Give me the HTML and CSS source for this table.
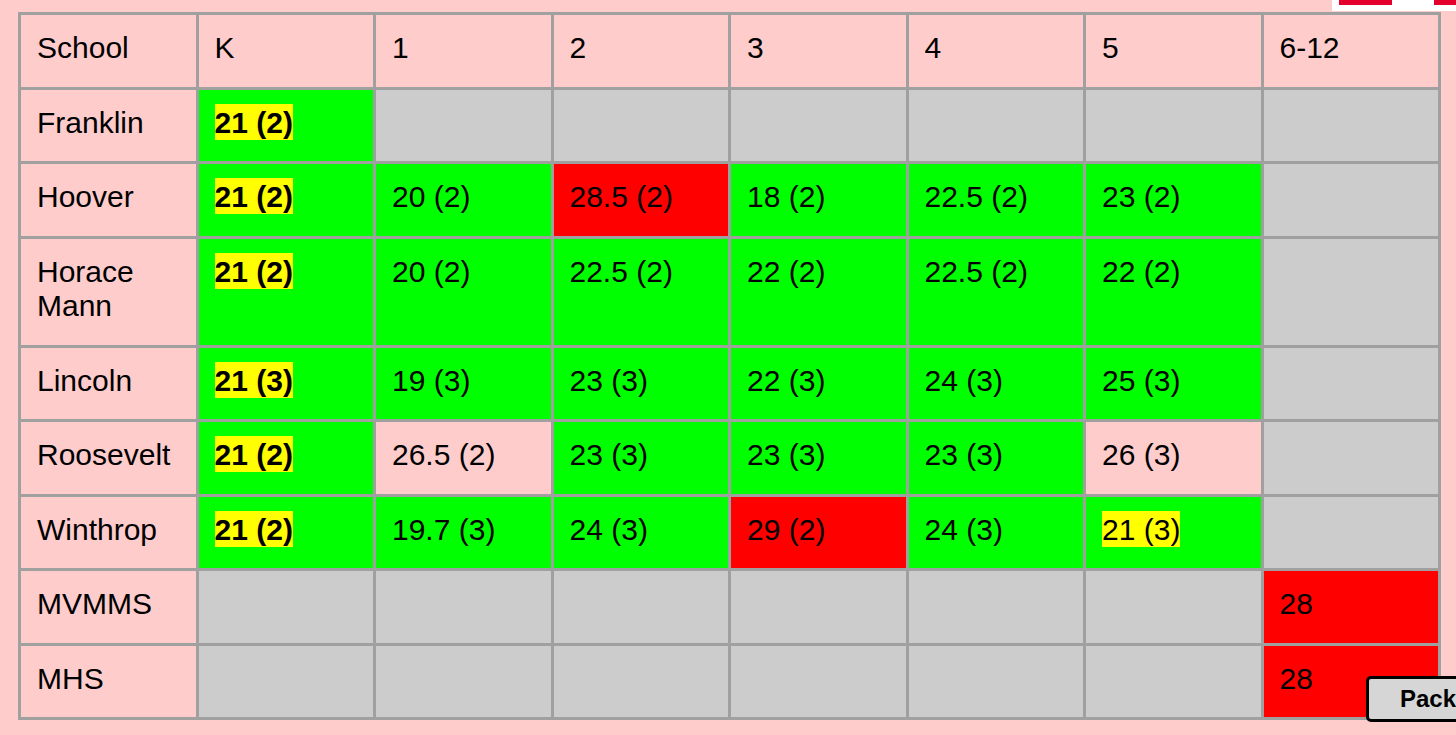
FILE: index.html
```html
<!DOCTYPE html>
<html>
<head>
<meta charset="utf-8">
<link rel="stylesheet" href="styles.css">
</head>
<body>
<div class="flag"><span class="bar bar-a"></span><span class="bar bar-b"></span></div>
<table class="grid">
  <tr><td class="pink">School</td><td class="pink">K</td><td class="pink">1</td><td class="pink">2</td><td class="pink">3</td><td class="pink">4</td><td class="pink">5</td><td class="pink">6-12</td></tr>
  <tr><td class="pink">Franklin</td><td class="green"><b class="hl">21 (2)</b></td><td class="grey"></td><td class="grey"></td><td class="grey"></td><td class="grey"></td><td class="grey"></td><td class="grey"></td></tr>
  <tr><td class="pink">Hoover</td><td class="green"><b class="hl">21 (2)</b></td><td class="green">20 (2)</td><td class="red">28.5 (2)</td><td class="green">18 (2)</td><td class="green">22.5 (2)</td><td class="green">23 (2)</td><td class="grey"></td></tr>
  <tr><td class="pink">Horace<br>Mann</td><td class="green"><b class="hl">21 (2)</b></td><td class="green">20 (2)</td><td class="green">22.5 (2)</td><td class="green">22 (2)</td><td class="green">22.5 (2)</td><td class="green">22 (2)</td><td class="grey"></td></tr>
  <tr><td class="pink">Lincoln</td><td class="green"><b class="hl">21 (3)</b></td><td class="green">19 (3)</td><td class="green">23 (3)</td><td class="green">22 (3)</td><td class="green">24 (3)</td><td class="green">25 (3)</td><td class="grey"></td></tr>
  <tr><td class="pink">Roosevelt</td><td class="green"><b class="hl">21 (2)</b></td><td class="pink">26.5 (2)</td><td class="green">23 (3)</td><td class="green">23 (3)</td><td class="green">23 (3)</td><td class="pink">26 (3)</td><td class="grey"></td></tr>
  <tr><td class="pink">Winthrop</td><td class="green"><b class="hl">21 (2)</b></td><td class="green">19.7 (3)</td><td class="green">24 (3)</td><td class="red">29 (2)</td><td class="green">24 (3)</td><td class="green"><span class="hl">21 (3)</span></td><td class="grey"></td></tr>
  <tr><td class="pink">MVMMS</td><td class="grey"></td><td class="grey"></td><td class="grey"></td><td class="grey"></td><td class="grey"></td><td class="grey"></td><td class="red">28</td></tr>
  <tr><td class="pink">MHS</td><td class="grey"></td><td class="grey"></td><td class="grey"></td><td class="grey"></td><td class="grey"></td><td class="grey"></td><td class="red">28</td></tr>
</table>
<button class="pack">Pack</button>
</body>
</html>
```
FILE: styles.css
```css
html, body {
  margin: 0;
  background: #ffcccc;
  overflow: hidden;
}
body {
  padding: 12px 0 0 18px;
  font-family: "Liberation Sans", Arial, sans-serif;
  color: #000;
}
.flag {
  position: absolute;
  top: 0;
  left: 1332px;
  width: 124px;
  height: 11px;
  background: #ffffff;
}
.bar {
  position: absolute;
  top: 0;
  height: 5px;
  background: #e3002b;
}
.bar-a { left: 7px; width: 53px; }
.bar-b { left: 102px; width: 30px; }
.grid {
  border-collapse: collapse;
  table-layout: fixed;
  width: 1423px;
}
.grid td {
  border: 3px solid #a0a0a0;
  padding: 16px 10px 21px 16px;
  font-size: 30px;
  line-height: 34.5px;
  vertical-align: top;
  height: 34.5px;
}
.pink { background: #ffcccc; }
.green { background: #00ff00; }
.red { background: #ff0000; }
.grey { background: #cccccc; }
.hl {
  background: #ffff00;
  padding: 2px 0 1px;
}
.pack {
  position: absolute;
  left: 1366px;
  top: 676px;
  width: 120px;
  height: 46px;
  border: 3px solid #000;
  border-radius: 5px;
  background: #d6d6d6;
  font-family: "Liberation Sans", Arial, sans-serif;
  font-weight: bold;
  font-size: 24px;
  text-align: left;
  padding: 0 0 0 31px;
  color: #000;
}
```
